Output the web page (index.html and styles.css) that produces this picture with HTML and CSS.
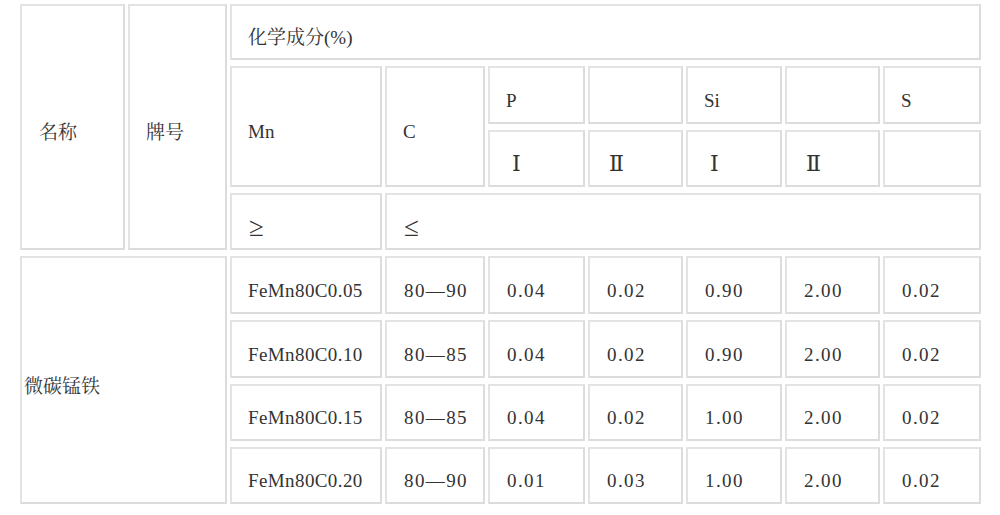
FILE: index.html
```html
<!DOCTYPE html>
<html lang="zh">
<head>
<meta charset="utf-8">
<title>微碳锰铁化学成分</title>
<link rel="stylesheet" href="styles.css">
</head>
<body>
<div class="sheet">
  <div class="cell name">名称</div>
  <div class="cell brand-h">牌号</div>
  <div class="cell chem">化学成分(%)</div>
  <div class="cell mn">Mn</div>
  <div class="cell c">C</div>
  <div class="cell">P</div>
  <div class="cell"></div>
  <div class="cell">Si</div>
  <div class="cell"></div>
  <div class="cell">S</div>
  <div class="cell roman r1">Ⅰ</div>
  <div class="cell roman r2">Ⅱ</div>
  <div class="cell roman r1">Ⅰ</div>
  <div class="cell roman r2">Ⅱ</div>
  <div class="cell"></div>
  <div class="cell ge">≥</div>
  <div class="cell le">≤</div>

  <div class="cell product">微碳锰铁</div>

  <div class="cell brand">FeMn80C0.05</div>
  <div class="cell num">80—90</div>
  <div class="cell num">0.04</div>
  <div class="cell num">0.02</div>
  <div class="cell num">0.90</div>
  <div class="cell num">2.00</div>
  <div class="cell num">0.02</div>

  <div class="cell brand">FeMn80C0.10</div>
  <div class="cell num">80—85</div>
  <div class="cell num">0.04</div>
  <div class="cell num">0.02</div>
  <div class="cell num">0.90</div>
  <div class="cell num">2.00</div>
  <div class="cell num">0.02</div>

  <div class="cell brand">FeMn80C0.15</div>
  <div class="cell num">80—85</div>
  <div class="cell num">0.04</div>
  <div class="cell num">0.02</div>
  <div class="cell num">1.00</div>
  <div class="cell num">2.00</div>
  <div class="cell num">0.02</div>

  <div class="cell brand">FeMn80C0.20</div>
  <div class="cell num">80—90</div>
  <div class="cell num">0.01</div>
  <div class="cell num">0.03</div>
  <div class="cell num">1.00</div>
  <div class="cell num">2.00</div>
  <div class="cell num">0.02</div>
</div>
</body>
</html>
```
FILE: styles.css
```css
html, body {
  margin: 0;
  padding: 0;
  background: #ffffff;
}

body {
  font-family: "Liberation Serif", "Noto Serif CJK SC", "Noto Sans CJK SC", serif;
  font-size: 19px;
  color: #333333;
}

.sheet {
  display: grid;
  grid-template-columns: 105px 99px 152px 100px 97px 95px 96px 95px 98px;
  grid-template-rows: 56px 58px 57px 57px 58px 58px 57px 57px;
  column-gap: 3px;
  row-gap: 6px;
  padding: 4px 0 0 20px;
}

.cell {
  box-sizing: border-box;
  border: 2px solid #e3e3e3;
  border-right-color: #dcdcdc;
  border-bottom-color: #dcdcdc;
  display: flex;
  align-items: center;
  padding: 10px 4px 0 16px;
  line-height: 1;
  white-space: nowrap;
}

.name { grid-column: 1; grid-row: 1 / span 4; padding-left: 17px; }
.brand-h { grid-column: 2; grid-row: 1 / span 4; }
.chem { grid-column: 3 / span 7; grid-row: 1; }
.mn { grid-column: 3; grid-row: 2 / span 2; }
.c { grid-column: 4; grid-row: 2 / span 2; }
.ge { grid-column: 3; grid-row: 4; }
.le { grid-column: 4 / span 6; grid-row: 4; }

.product {
  grid-column: 1 / span 2;
  grid-row: 5 / span 4;
  padding-left: 2px;
  padding-top: 12px;
}

.brand { letter-spacing: 0.4px; }
.num { letter-spacing: 1.4px; padding-left: 17px; }

.roman { font-family: "DejaVu Serif", "Liberation Serif", serif; font-size: 22px; }
.r1 { padding-left: 22px; }
.r2 { padding-left: 19px; }

.ge, .le { font-size: 27px; padding-left: 17px; padding-top: 12px; }
```
